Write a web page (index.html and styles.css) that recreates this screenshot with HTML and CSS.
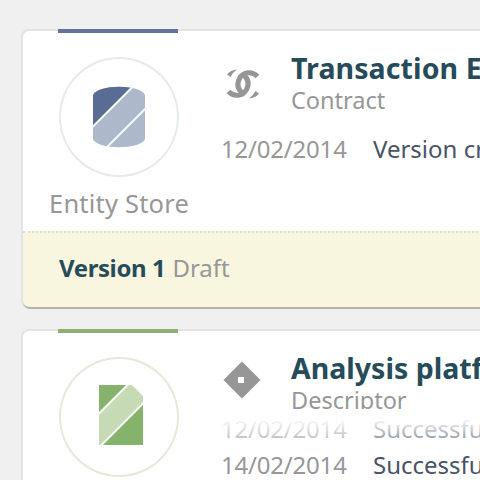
FILE: index.html
```html
<!DOCTYPE html>
<html lang="en">
<head>
<meta charset="utf-8">
<title>Entities</title>
<link rel="stylesheet" href="styles.css">
</head>
<body>
<main class="list">
  <article class="card card-blue">
    <div class="card-body">
      <div class="kind">
        <div class="badge">
          <svg width="120" height="120" viewBox="0 0 120 120">
            <path fill="#adb8ca" d="M34 38C38 27 82 27 86 38V82C82 93 38 93 34 82Z"/>
            <path fill="#596d94" d="M34 38C38 31 56 28 73 31L34 70Z"/>
            <path stroke="#f4fbff" stroke-width="2" d="M73.500 30L33 70.500M87 51L48 90"/>
          </svg>
        </div>
        <div class="kind-name">Entity Store</div>
      </div>
      <div class="detail">
        <header class="head">
          <svg class="glyph" width="70" height="60" viewBox="0 0 70 60">
            <g fill="none" stroke="#969696" stroke-width="5">
              <path d="M47.500 21.500C42 15.500 33 17 29.500 23.500C26.500 29.500 28 34.500 32.500 38"/>
              <path d="M18.500 36.500C24 42.500 33 41 36.500 34.500C39.500 28.500 38 23.500 33.500 20"/>
            </g>
            <path fill="#969696" d="M17 19.500Q20.500 15 27 14.500Q23 17 20.500 22ZM49 38.500Q45.500 43 39 43.500Q43 41 45.500 36Z"/>
          </svg>
          <div class="names">
            <h2 class="title title-one">Transaction Engine</h2>
            <div class="type">Contract</div>
          </div>
        </header>
        <div class="history">
          <div class="entry"><span class="date">12/02/2014</span><span class="event">Version created</span></div>
        </div>
      </div>
    </div>
    <footer class="version"><strong class="number">Version 1</strong><span class="state">Draft</span></footer>
  </article>
  <article class="card card-green">
    <div class="card-body">
      <div class="kind">
        <div class="badge">
          <svg width="120" height="120" viewBox="0 0 120 120">
            <path fill="#86b36b" d="M40 28H68L40 56ZM84 47V88H43Z"/>
            <path fill="#c5dab5" d="M40 57.500L69.500 28H73L84 39V46L42 88H40Z"/>
            <path stroke="#fbfffa" stroke-width="2" d="M69.500 27L39.500 57M85 45.500L42 88.500"/>
          </svg>
        </div>
        <div class="kind-name">Descriptor</div>
      </div>
      <div class="detail">
        <header class="head">
          <svg class="glyph" width="70" height="60" viewBox="0 0 70 60">
            <path fill="#969696" fill-rule="evenodd" d="M32 6.500L50.500 25L32 43.500L13.500 25ZM28 22V28H34V22Z"/>
          </svg>
          <div class="names">
            <h2 class="title title-two">Analysis platform</h2>
            <div class="type">Descriptor</div>
          </div>
        </header>
        <div class="history history-scrolled">
          <div class="entry"><span class="date">12/02/2014</span><span class="event">Successfully</span></div>
          <div class="entry"><span class="date">14/02/2014</span><span class="event">Successfully</span></div>
        </div>
      </div>
    </div>
  </article>
</main>
</body>
</html>
```
FILE: styles.css
```css
* { box-sizing: border-box; }

html, body { height: 100%; }

body {
  margin: 0;
  overflow: hidden;
  background: #f0f0f0;
  font-family: "Noto Sans", "Open Sans", sans-serif;
  font-size: 24px;
  color: #979797;
  white-space: nowrap;
}

svg { display: block; }

.list {
  display: flex;
  flex-direction: column;
  gap: 20px;
  width: 720px;
  padding: 29px 0 0 21px;
}

.card {
  position: relative;
  height: 280px;
  flex: none;
  display: flex;
  flex-direction: column;
  background: #fff;
  border: 2px solid #e3e3e3;
  border-bottom: 0;
  border-radius: 8px;
}

.card::before {
  content: "";
  position: absolute;
  top: -2px;
  left: 35px;
  width: 120px;
  height: 4px;
  background: var(--accent);
}

.card-blue { --accent: #65739a; --ring: #e7eaeb; }
.card-green { --accent: #8aaf77; --ring: #e5e9da; }

.card-body { display: flex; height: 200px; }

.kind {
  width: 187px;
  padding: 26px 0 0 36px;
}

.badge {
  width: 120px;
  height: 120px;
  border-radius: 50%;
  box-shadow: inset 0 0 0 2px var(--ring);
}

.kind-name {
  width: 160px;
  margin: 6px 0 0 -10px;
  font-size: 25.500px;
  line-height: 40px;
  letter-spacing: 0.200px;
}

.detail { padding-top: 20px; }

.head { display: flex; height: 58px; overflow: hidden; }

.glyph { margin: 4px 11px 0 0; }

.title {
  margin: 0;
  height: 35px;
  line-height: 34px;
  font-size: 28.500px;
  color: #264b5b;
}

.title-one { letter-spacing: 0.100px; }
.title-two { letter-spacing: 0; }

.type { line-height: 28px; font-size: 23.500px; }

.history { padding-top: 22px; }

.history-scrolled {
  position: relative;
  height: 84px;
  padding-top: 2px;
}

.history-scrolled::after {
  content: "";
  position: absolute;
  inset: 0 0 auto 0;
  height: 36px;
  background: linear-gradient(#fff 25%, rgba(255, 255, 255, .25));
}

.entry { display: flex; height: 36px; line-height: 36px; padding-left: 11px; }
.date { width: 152px; letter-spacing: -0.200px; }
.event { color: #4a5367; }

.version {
  flex: 1;
  display: flex;
  gap: 7px;
  padding-left: 36px;
  line-height: 70px;
  background: #f9f6df;
  border-top: 2px dotted #dedccb;
  border-bottom: 2px solid #b3b3a6;
  border-radius: 0 0 7px 7px;
}

.number { color: #264b5b; letter-spacing: -0.400px; }
```
